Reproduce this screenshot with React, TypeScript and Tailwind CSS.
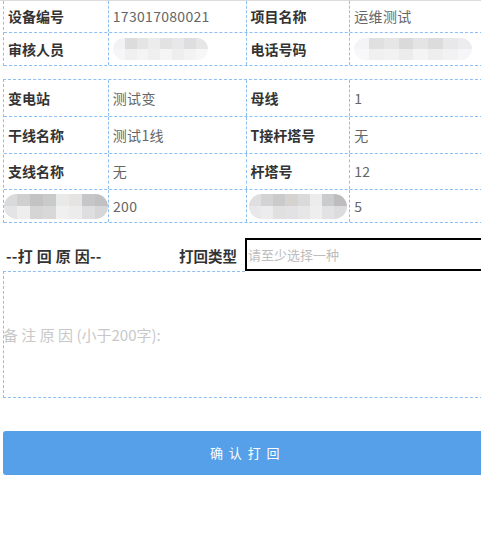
import React from "react";

const dash = "border-dashed border-[#8dbff5]";

function Mosaic({ w, h, cols }: { w: number; h: number; cols: string[][] }) {
  return (
    <div
      className="rounded-full overflow-hidden flex flex-col"
      style={{ width: w, height: h }}
    >
      {cols.map((row, i) => (
        <div key={i} className="flex flex-1">
          {row.map((c, j) => (
            <div key={j} className="flex-1" style={{ background: c }} />
          ))}
        </div>
      ))}
    </div>
  );
}

function Label({ children }: { children: React.ReactNode }) {
  return <span className="font-bold text-[#333] text-[14px]">{children}</span>;
}
function Val({ children }: { children: React.ReactNode }) {
  return <span className="text-[#666] text-[14px] tracking-[0.3px]">{children}</span>;
}

function Cell({
  children,
  w,
  last,
}: {
  children?: React.ReactNode;
  w: string;
  last?: boolean;
}) {
  return (
    <div className={`${w} pl-[4px] flex items-center ${last ? "" : `border-r ${dash}`}`}>{children}</div>
  );
}

function Row({ h, cells }: { h: string; cells: React.ReactNode[] }) {
  const widths = ["w-[105px]", "w-[138px]", "w-[104px]", "w-[138px]"];
  return (
    <div className={`flex ${h} border-b ${dash}`}>
      {cells.map((c, i) => (
        <Cell key={i} w={widths[i]} last={i === 3}>
          {c}
        </Cell>
      ))}
    </div>
  );
}

export default function App() {
  return (
    <div
      className="w-[481px] h-[537px] overflow-hidden bg-white"
      style={{ fontFamily: '"Noto Sans CJK SC", "Noto Sans", sans-serif' }}
    >
      <div className="h-px bg-[#dcdcdc] w-full" />
      <div className="ml-[3px] w-[485px]">
        {/* table 1 */}
        <div className={`border-l ${dash}`}>
          <Row
            h="h-[32px]"
            cells={[
              <Label>设备编号</Label>,
              <Val>173017080021</Val>,
              <Label>项目名称</Label>,
              <Val>运维测试</Val>,
            ]}
          />
          <Row
            h="h-[33px]"
            cells={[
              <Label>审核人员</Label>,
              <Mosaic
                w={95}
                h={22}
                cols={[
                  ["#f2f2f4", "#dcdcdc", "#e4e4e4", "#ececec", "#e2e2e2", "#e8e8ea", "#dedee0", "#e6e6e6"],
                  ["#f6f6f8", "#f0f0f0", "#f4f4f4", "#efefef", "#f5f5f5", "#eeeeee", "#f3f3f3", "#f7f7f7"],
                ]}
              />,
              <Label>电话号码</Label>,
              <Mosaic
                w={118}
                h={22}
                cols={[
                  ["#f4f4f6", "#e0e0e0", "#e6e6e6", "#dadada", "#e4e4e4", "#dcdcdc", "#e8e8e8", "#ececee"],
                  ["#f8f8fa", "#f0f0f0", "#f2f2f2", "#ececec", "#f4f4f4", "#eeeeee", "#f2f2f2", "#f6f6f8"],
                ]}
              />,
            ]}
          />
        </div>

        {/* table 2 */}
        <div className={`mt-[13px] border-l border-t ${dash}`}>
          <Row
            h="h-[37px]"
            cells={[<Label>变电站</Label>, <Val>测试变</Val>, <Label>母线</Label>, <Val>1</Val>]}
          />
          <Row
            h="h-[37px]"
            cells={[<Label>干线名称</Label>, <Val>测试1线</Val>, <Label>T接杆塔号</Label>, <Val>无</Val>]}
          />
          <Row
            h="h-[36px]"
            cells={[<Label>支线名称</Label>, <Val>无</Val>, <Label>杆塔号</Label>, <Val>12</Val>]}
          />
          <div className={`flex h-[33px] border-b ${dash}`}>
            <div className={`w-[105px] flex items-center border-r ${dash}`}>
              <Mosaic
                w={104}
                h={25}
                cols={[
                  ["#d9dadc", "#cfcfcf", "#c3c3c4", "#c9caca", "#e9e9e9", "#e6e4e3", "#c6c5c7", "#c1c0c2"],
                  ["#e4e4e6", "#eeeeee", "#d5d5d5", "#d8d8d8", "#f0f0f0", "#ececec", "#dedde0", "#d6d6d8"],
                ]}
              />
            </div>
            <div className={`w-[138px] pl-[4px] flex items-center border-r ${dash}`}>
              <Val>200</Val>
            </div>
            <div className={`w-[104px] pl-[2px] flex items-center border-r ${dash}`}>
              <Mosaic
                w={98}
                h={25}
                cols={[
                  ["#dfdfe1", "#d3d3d3", "#cacaca", "#d5d2d0", "#d8dadc", "#ececec", "#cacbcd", "#bebcbe"],
                  ["#e8e8ea", "#ececec", "#e0e0e0", "#e2e2e4", "#e6e6e6", "#eeeeee", "#e2e2e4", "#dcdcde"],
                ]}
              />
            </div>
            <div className="w-[138px] pl-[4px] flex items-center">
              <Val>5</Val>
            </div>
          </div>
        </div>

        {/* section 2 */}
        <div className="mt-[15px] flex h-[33px] items-center">
          <div className="w-[176px] pl-[3px] pt-[3px] font-bold text-[#333] text-[15px] tracking-[0.3px]">
            --打 回 原 因--
          </div>
          <div className="w-[66px] pt-[2px] font-bold text-[#333] text-[14.5px]">打回类型</div>
          <div className="flex-1 h-[33px] border-2 border-black flex items-center pl-[1px] text-[13px] text-[#bdbdbd]">
            请至少选择一种
          </div>
        </div>
        <div className={`h-[127px] border-l border-b ${dash} flex items-center pt-[3px]`}>
          <span className="text-[15px] text-[#c8c8c8] -ml-px">备 注 原 因 (小于200字):</span>
        </div>
        <div className={`-mt-[127px] h-[127px] border-t ${dash} w-[242px] pointer-events-none`} />

        {/* button */}
        <div className="mt-[33px] h-[44px] rounded-[3px] bg-[#569fe9] flex items-center justify-center text-white text-[13px] tracking-[1.5px]">
          确 认 打 回
        </div>
      </div>
    </div>
  );
}
